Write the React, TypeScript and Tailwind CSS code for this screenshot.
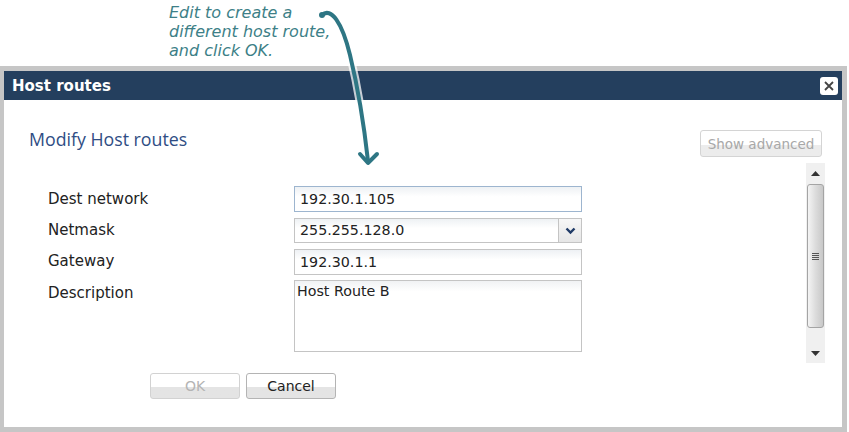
import React from "react";

const font = { fontFamily: '"DejaVu Sans", Verdana, sans-serif' };

function Field({ value, focused }: { value: string; focused?: boolean }) {
    return (
        <input
            readOnly
            defaultValue={value}
            className={
                "h-[26px] w-[288px] border px-[5px] text-[14.25px] text-[#222] outline-none bg-linear-to-b from-[#eef1f4] to-white to-40% " +
                (focused ? "border-[#9db5cf]" : "border-[#c4c4c4]")
            }
            style={font}
        />
    );
}

function Btn({ label, disabled }: { label: string; disabled?: boolean }) {
    return (
        <button
            className={
                "h-[26px] w-[90px] rounded-[3px] border text-[14px] bg-linear-to-b from-white from-55% to-[#e4e4e4] to-55% " +
                (disabled ? "border-[#d2d2d2] text-[#b4b4b4]" : "border-[#b4b4b4] text-[#222]")
            }
            style={font}
        >
            {label}
        </button>
    );
}

function Arrow() {
    return (
        <svg className="pointer-events-none absolute left-0 top-0" width="849" height="432">
            <g fill="none" strokeLinecap="round" strokeLinejoin="round">
                <path d="M322 15 C331 7 342 22 350 55 S364 125 368 161" stroke="#ffffff" strokeWidth="8" opacity="0.75" />
                <path d="M360 154 L368 163 L377 154" stroke="#ffffff" strokeWidth="8" opacity="0.75" />
                <path d="M322 15 C331 7 342 22 350 55 S364 125 368 161" stroke="#2e7684" strokeWidth="4" />
                <path d="M360 154 L368 163 L377 154" stroke="#2e7684" strokeWidth="4" />
                <circle cx="322" cy="15" r="3" fill="#2e7684" />
            </g>
        </svg>
    );
}

export default function App() {
    return (
        <div className="relative h-[432px] w-[849px] overflow-hidden bg-white">
            <div
                className="h-[66px] pl-[169px] pt-[3px] text-[16px] italic leading-[19px] text-[#3d7f87]"
                style={font}
            >
                <p>Edit to create a</p>
                <p>different host route,</p>
                <p>and click OK.</p>
            </div>

            <div className="flex h-[366px] w-[847px] flex-col border-b-[5px] border-l-4 border-r-[5px] border-t-[5px] border-[#c6c6c6]">
                <div className="flex h-[29px] items-center justify-between bg-[#243f5e] pl-[8px] pr-[4px]">
                    <span className="pt-[1px] text-[15px] font-bold text-white" style={font}>
                        Host routes
                    </span>
                    <span className="flex h-[18px] w-[18px] items-center justify-center rounded-[3px] bg-white">
                        <svg width="12" height="12" viewBox="0 0 12 12">
                            <path d="M2 2 L10 10 M10 2 L2 10" stroke="#444" strokeWidth="1.8" />
                        </svg>
                    </span>
                </div>

                <div className="flex flex-1 flex-col bg-white">
                    <div className="mt-[30px] flex items-start justify-between pl-[25px] pr-[20px]">
                        <h2
                            className="text-[17.75px] leading-[19px] text-[#2f4d84]"
                            style={{ fontFamily: '"Open Sans", sans-serif' }}
                        >
                            Modify Host routes
                        </h2>
                        <button
                            className="h-[27px] w-[122px] rounded-[3px] border border-[#d4d4d4] pt-[2px] text-[13.5px] text-[#a8a8a8] bg-linear-to-b from-white from-55% to-[#ececec] to-55%"
                            style={font}
                        >
                            Show advanced
                        </button>
                    </div>

                    <div className="mt-[6px] flex h-[200px]">
                        <div className="flex-1 pl-[44px] pt-[23px]">
                            <div className="grid grid-cols-[246px_288px] gap-y-[6px] text-[15px] text-[#222]" style={font}>
                                <span className="self-center">Dest network</span>
                                <Field value="192.30.1.105" focused />

                                <span className="self-center">Netmask</span>
                                <div className="flex h-[25px] w-[288px] border border-[#c4c4c4] bg-linear-to-b from-[#eef1f4] to-white to-40%">
                                    <span className="flex-1 self-center pl-[5px] text-[14.25px]">255.255.128.0</span>
                                    <span className="flex w-[23px] items-center justify-center border-l border-[#c4c4c4] bg-linear-to-b from-[#f7f7f7] to-[#e6e6e6]">
                                        <svg width="11" height="8" viewBox="0 0 11 8">
                                            <path d="M1.5 1.5 L5.5 5.5 L9.5 1.5" fill="none" stroke="#1f3a66" strokeWidth="2.4" />
                                        </svg>
                                    </span>
                                </div>

                                <span className="self-center">Gateway</span>
                                <div className="h-[25px]">
                                    <Field value="192.30.1.1" />
                                </div>

                                <span className="pt-[2px]">Description</span>
                                <textarea
                                    readOnly
                                    defaultValue="Host Route B"
                                    className="h-[72px] w-[288px] resize-none border border-[#c4c4c4] px-[2px] pt-0 text-[14.25px] text-[#222] outline-none bg-linear-to-b from-[#f0f2f4] to-white to-15%"
                                    style={font}
                                />
                            </div>
                        </div>

                        <div className="mr-[17px] flex w-[19px] flex-col bg-[#f0f0f0]">
                            <div className="flex h-[21px] items-center justify-center">
                                <svg width="9" height="5" viewBox="0 0 9 5">
                                    <path d="M0 5 L4.5 0 L9 5 Z" fill="#333" />
                                </svg>
                            </div>
                            <div className="mx-[1px] flex h-[144px] items-center justify-center rounded-[3px] border border-[#a4a4a4] bg-linear-to-r from-[#f4f4f4] via-[#dcdcdc] to-[#c8c8c8]">
                                <div className="flex flex-col gap-[1px]">
                                    <span className="h-[1px] w-[7px] bg-[#555]" />
                                    <span className="h-[1px] w-[7px] bg-[#555]" />
                                    <span className="h-[1px] w-[7px] bg-[#555]" />
                                    <span className="h-[1px] w-[7px] bg-[#555]" />
                                </div>
                            </div>
                            <div className="flex flex-1 items-end justify-center pb-[7px]">
                                <svg width="9" height="5" viewBox="0 0 9 5">
                                    <path d="M0 0 L4.5 5 L9 0 Z" fill="#333" />
                                </svg>
                            </div>
                        </div>
                    </div>

                    <div className="mt-[10px] flex gap-[6px] pl-[146px]">
                        <Btn label="OK" disabled />
                        <Btn label="Cancel" />
                    </div>
                </div>
            </div>

            <Arrow />
        </div>
    );
}
